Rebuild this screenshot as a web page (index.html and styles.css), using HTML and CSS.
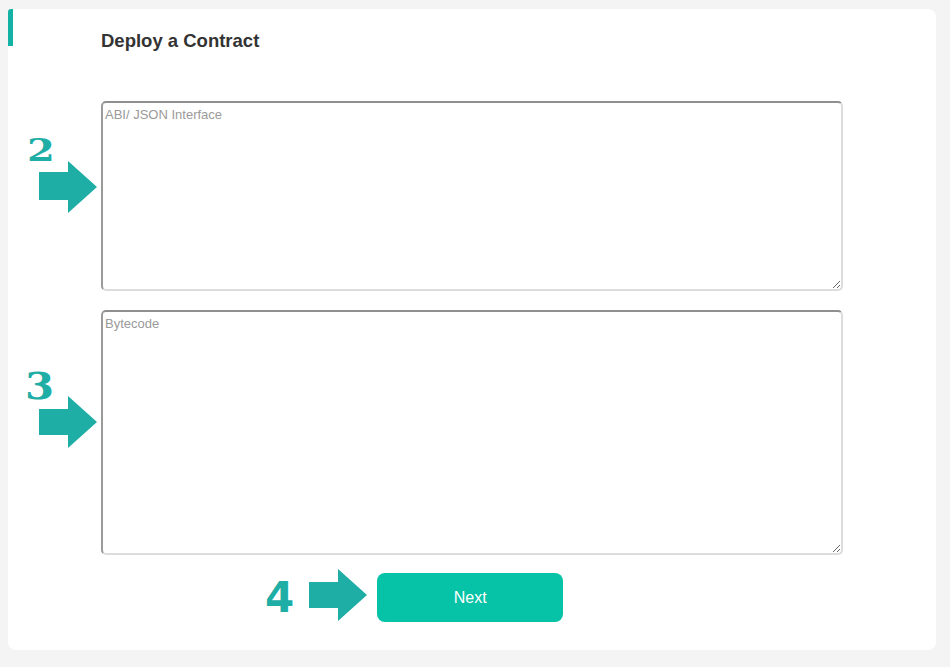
FILE: index.html
```html
<!DOCTYPE html>
<html lang="en">
<head>
<meta charset="utf-8">
<title>Deploy a Contract</title>
<link rel="stylesheet" href="styles.css">
</head>
<body>
<main class="card">
  <h1 class="title">Deploy a Contract</h1>
  <div class="field field-abi">
    <div class="annot">
      <span class="num num-2">2</span>
      <svg class="arrow" viewBox="0 0 58 52" width="58" height="52"><polygon points="0,11 29,11 29,0 58,26 29,52 29,39 0,39"/></svg>
    </div>
    <textarea class="input input-abi" placeholder="ABI/ JSON Interface"></textarea>
  </div>
  <div class="field field-code">
    <div class="annot">
      <span class="num num-3">3</span>
      <svg class="arrow" viewBox="0 0 58 52" width="58" height="52"><polygon points="0,13 29,13 29,0 58,26 29,52 29,39 0,39"/></svg>
    </div>
    <textarea class="input input-code" placeholder="Bytecode"></textarea>
  </div>
  <div class="actions">
    <span class="num num-4">4</span>
    <svg class="arrow arrow-4" viewBox="0 0 58 52" width="58" height="52"><polygon points="0,13 29,13 29,0 58,26 29,52 29,39 0,39"/></svg>
    <button class="next" type="button">Next</button>
  </div>
</main>
</body>
</html>
```
FILE: styles.css
```css
html, body {
  margin: 0;
  padding: 0;
}
body {
  background: #f4f4f4;
  padding: 9px 0 0 8px;
  font-family: "Liberation Sans", Arial, sans-serif;
}
.card {
  position: relative;
  box-sizing: border-box;
  width: 928px;
  height: 641px;
  background: #ffffff;
  border-radius: 8px;
  padding-top: 21px;
}
.card::before {
  content: "";
  position: absolute;
  left: 0;
  top: 0;
  width: 5px;
  height: 37px;
  background: #14b2a4;
  border-radius: 3px 0 0 0;
}
.title {
  margin: 0 0 49px 93px;
  font-size: 18.5px;
  line-height: 22px;
  font-weight: bold;
  color: #333333;
}
.field {
  display: grid;
  grid-template-columns: 93px 742px;
}
.field-code {
  margin-top: 19px;
}
.annot {
  display: flex;
  flex-direction: column;
  align-items: flex-start;
  padding-left: 19px;
}
.num {
  color: #1eaea6;
  font-weight: bold;
  line-height: 1;
}
.num-2, .num-3 {
  font-family: "DejaVu Serif", "Liberation Serif", serif;
}
.num-2 {
  font-size: 32px;
  margin-top: 33px;
  transform-origin: left top;
  transform: scaleX(1.25);
}
.num-3 {
  font-size: 38px;
  margin-top: 57px;
  margin-left: -2px;
  transform-origin: left top;
  transform: scaleX(1.1);
}
.arrow {
  display: block;
  fill: #1eaea6;
  margin-left: 12px;
}
.num-2 + .arrow {
  margin-top: -5px;
}
.num-3 + .arrow {
  margin-top: -9px;
  margin-left: 12px;
}
.input {
  box-sizing: border-box;
  width: 742px;
  margin: 0;
  padding: 4px 2px 2px;
  border-style: solid;
  border-width: 2px;
  border-color: #8f8f8f #dcdcdc #dcdcdc #9a9a9a;
  border-radius: 5px;
  font-family: "Liberation Sans", Arial, sans-serif;
  font-size: 13px;
  color: #333333;
  background: #ffffff;
  outline: none;
}
.input::placeholder {
  color: #9a9a9a;
}
.input-abi {
  height: 190px;
}
.input-code {
  height: 245px;
}
.actions {
  display: flex;
  align-items: flex-start;
  margin: 18px 0 0 257px;
  height: 49px;
}
.num-4 {
  font-family: "DejaVu Sans", "Liberation Sans", sans-serif;
  font-size: 42px;
  margin-top: 4px;
}
.arrow-4 {
  margin: -4px 0 0 15px;
}
.next {
  margin-left: 10px;
  width: 186px;
  height: 49px;
  border: none;
  border-radius: 8px;
  background: #06c2a6;
  color: #ffffff;
  font-family: "Liberation Sans", Arial, sans-serif;
  font-size: 16px;
  cursor: pointer;
}
```
